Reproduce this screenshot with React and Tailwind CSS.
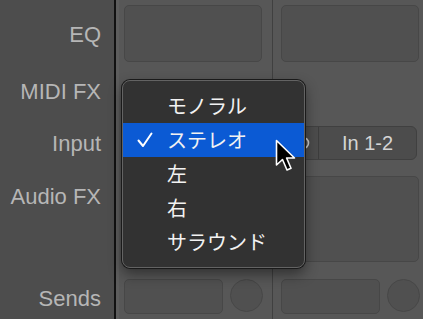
import React from 'react';

const labelCls = "flex justify-end pr-[13px] text-[22px] text-[#b6b6b6]";

const Box = ({ className = "" }) => (
  <div className={"rounded-[5px] border border-[#474747] bg-[#505050] " + className} />
);

const Circle = () => (
  <div className="h-[33px] w-[33px] shrink-0 rounded-full border border-[#474747] bg-[#505050]" />
);

const InputGroup = ({ label }) => (
  <div className="flex h-[34px] w-[136px] rounded-[6px] border border-[#404040] bg-[#4c4c4c]">
    <div className="flex w-[37px] items-center justify-center border-r border-[#3d3d3d]">
      <svg width="22" height="14" viewBox="0 0 22 14">
        <circle cx="8" cy="7" r="5.5" fill="none" stroke="#cfcfcf" strokeWidth="1.6" />
        <circle cx="14" cy="7" r="5.5" fill="none" stroke="#cfcfcf" strokeWidth="1.6" />
      </svg>
    </div>
    <div className="flex flex-1 items-center justify-center text-[20px] text-[#d4d4d4]">{label}</div>
  </div>
);

const Channel = ({ className }) => (
  <div className={"flex shrink-0 flex-col bg-[#575757] " + className}>
    <div className="h-[68px] pt-[5px]">
      <Box className="h-[57px] w-[138px]" />
    </div>
    <div className="h-[46px]" />
    <div className="flex h-[58px] items-center">
      <InputGroup label="In 1-2" />
    </div>
    <div className="h-[96px] pt-[4px]">
      <Box className="h-[86px] w-[138px]" />
    </div>
    <div className="flex h-[51px] items-start gap-[7px] pt-[11px]">
      <Box className="h-[35px] w-[99px]" />
      <Circle />
    </div>
  </div>
);

const items = ["モノラル", "ステレオ", "左", "右", "サラウンド"];

export default function App() {
  return (
    <div
      className="relative flex h-[319px] w-[423px] overflow-hidden bg-[#4d4d4d]"
      style={{ fontFamily: '"Liberation Sans", "Noto Sans CJK JP", sans-serif' }}
    >
      <div className="flex w-[114px] shrink-0 flex-col bg-[#4d4d4d]">
        <div className={labelCls + " h-[68px] items-center"}>EQ</div>
        <div className={labelCls + " h-[46px] items-center"}>MIDI FX</div>
        <div className={labelCls + " h-[58px] items-center"}>Input</div>
        <div className={labelCls + " h-[96px] items-start pt-[8px]"}>Audio FX</div>
        <div className={labelCls + " h-[51px] items-start pt-[14px]"}>Sends</div>
      </div>
      <div className="w-[2px] shrink-0 bg-[#111]" />
      <div className="w-[3px] shrink-0 bg-[#5d5d5d]" />
      <Channel className="w-[153px] pl-[5px]" />
      <div className="w-[1px] shrink-0 bg-[#404040]" />
      <Channel className="w-[160px] pl-[8px]" />

      {/* popup menu */}
      <div className="absolute left-[122px] top-[80px] w-[183px] rounded-[8px] border border-[#636363] bg-[#323232] py-[8px] shadow-[0_0_0_1px_#1a1a1a,0_6px_14px_rgba(0,0,0,0.45)]">
        {items.map((t, i) => (
          <div
            key={t}
            className={
              "flex h-[34px] items-center text-[20px] text-[#f2f2f2] " +
              (i === 1 ? "bg-[#0b5ad4]" : "")
            }
          >
            <div className="flex w-[44px] justify-center">
              {i === 1 && (
                <svg width="16" height="16" viewBox="0 0 16 16">
                  <polyline points="1.5,8.5 6,14 14.5,1.5" fill="none" stroke="#fff" strokeWidth="2" strokeLinecap="round" strokeLinejoin="round" />
                </svg>
              )}
            </div>
            <span style={{ fontFamily: '"Noto Sans CJK JP", sans-serif' }}>{t}</span>
          </div>
        ))}
      </div>

      {/* cursor */}
      <svg className="absolute left-[275px] top-[139px]" width="26" height="36" viewBox="0 0 26 36">
        <path d="M1.5 1.5 L1.5 26 L7.5 20.5 L12 31 L16 29.3 L11.6 19 L19.5 19 Z" fill="#000" stroke="#fff" strokeWidth="1.6" strokeLinejoin="round" />
      </svg>
    </div>
  );
}
